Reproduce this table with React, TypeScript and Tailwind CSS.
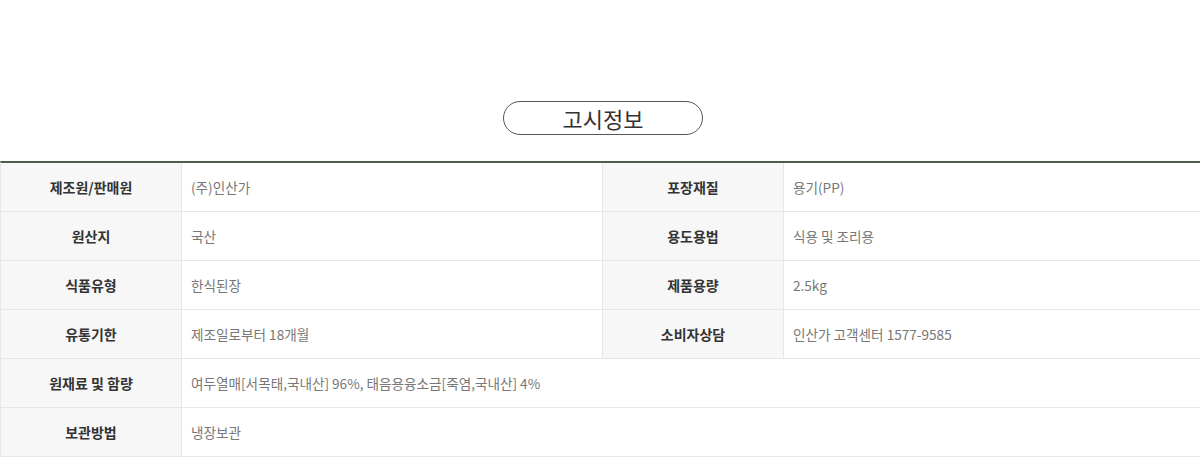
const rows: { label: string; value: string; label2?: string; value2?: string }[] = [
  { label: "제조원/판매원", value: "(주)인산가", label2: "포장재질", value2: "용기(PP)" },
  { label: "원산지", value: "국산", label2: "용도용법", value2: "식용 및 조리용" },
  { label: "식품유형", value: "한식된장", label2: "제품용량", value2: "2.5kg" },
  { label: "유통기한", value: "제조일로부터 18개월", label2: "소비자상담", value2: "인산가 고객센터 1577-9585" },
  { label: "원재료 및 함량", value: "여두열매[서목태,국내산] 96%, 태음용융소금[죽염,국내산] 4%" },
  { label: "보관방법", value: "냉장보관" },
];

function Label({ children }: { children: React.ReactNode }) {
  return (
    <div className="w-[181px] shrink-0 bg-[#f7f7f7] flex items-center justify-center text-[14px] font-bold text-[#333] border-r border-[#e6e6e6]">
      {children}
    </div>
  );
}

function Value({ children, wide }: { children: React.ReactNode; wide?: boolean }) {
  return (
    <div className={`${wide ? "flex-1" : "w-[421px]"} flex items-center pl-[9px] text-[13.6px] text-[#777]`}>
      {children}
    </div>
  );
}

export default function App() {
  return (
    <div className="w-[1200px] h-[457px] bg-white overflow-hidden" style={{ fontFamily: '"Noto Sans CJK KR", "Noto Sans", sans-serif' }}>
      {/* Title */}
      <div className="pt-[101px] pl-[6px] flex justify-center">
        <div className="w-[200px] h-[34px] rounded-full border border-[#555] flex items-center justify-center text-[22px] text-[#333] leading-none">
          고시정보
        </div>
      </div>

      {/* Table */}
      <div className="mt-[26px] border-t-2 border-[#4f5c4a] border-l border-l-[#e6e6e6]">
        {rows.map((row) => (
          <div key={row.label} className="flex h-[49px] border-b border-[#e6e6e6]">
            <Label>{row.label}</Label>
            {row.label2 ? (
              <>
                <div className="w-[421px] flex items-center pl-[9px] text-[13.6px] text-[#777] border-r border-[#e6e6e6]">
                  {row.value}
                </div>
                <Label>{row.label2}</Label>
                <Value wide>{row.value2}</Value>
              </>
            ) : (
              <Value wide>{row.value}</Value>
            )}
          </div>
        ))}
      </div>
    </div>
  );
}
